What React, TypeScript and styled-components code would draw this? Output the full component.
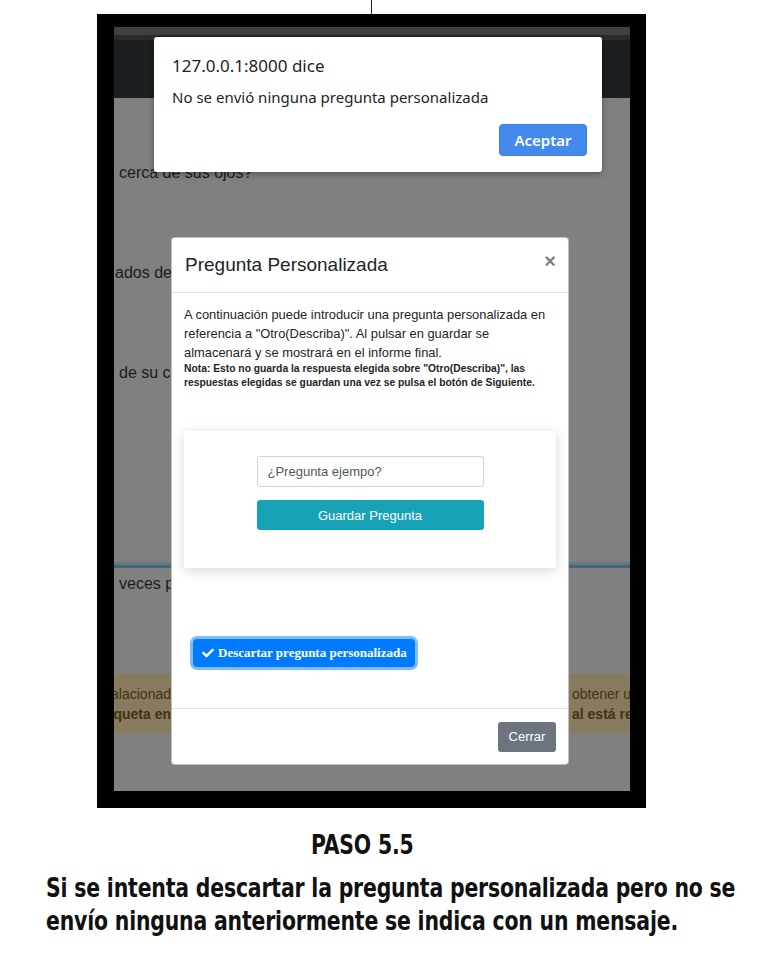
import React from "react";
import styled, { createGlobalStyle } from "styled-components";
import { FaCheck } from "react-icons/fa";

const GlobalStyle = createGlobalStyle`
  html, body {
    margin: 0;
    padding: 0;
    background: #ffffff;
  }
  body {
    font-family: "Liberation Sans", Arial, sans-serif;
  }
`;

const Page = styled.div`
  width: 762px;
  height: 968px;
  background: #fff;
  overflow: hidden;
`;

const Connector = styled.div`
  width: 1px;
  height: 14px;
  margin-left: 371px;
  background: #222;
`;

const Frame = styled.div`
  margin-left: 97px;
  width: 549px;
  height: 794px;
  box-sizing: border-box;
  padding: 13px 16px 17px 17px;
  background: #000;
`;

const Screen = styled.div`
  position: relative;
  width: 516px;
  height: 764px;
  overflow: hidden;
  background: #808080;
  display: flex;
  flex-direction: column;
`;

const TopStrip = styled.div`
  height: 8px;
  background: #404040;
  border-bottom: 5px solid #2b2b2b;
`;

const Navbar = styled.div`
  height: 58px;
  background: #1c1f22;
`;

const Content = styled.div`
  flex: 1;
  padding-top: 66px;
  display: flex;
  flex-direction: column;
  color: #1c1c1c;
  font-size: 16px;
`;

const QuestionText = styled.div<{ $space: number; $indent?: number }>`
  height: 18px;
  line-height: 18px;
  white-space: nowrap;
  padding-left: ${(p) => p.$indent ?? 5}px;
  margin-bottom: ${(p) => p.$space}px;
`;

const Divider = styled.div`
  height: 3px;
  background: #5e7b86;
  border-bottom: 3px solid #4b6570;
  margin-bottom: 7px;
`;

const Banner = styled.div`
  margin-top: 81px;
  height: 59px;
  background: #877b5f;
  color: #43340c;
  font-size: 14px;
  display: flex;
  flex-direction: column;
  justify-content: center;
  gap: 2px;
`;

const BannerLine = styled.div<{ $bold?: boolean }>`
  display: grid;
  grid-template-columns: 57px 401px 1fr;
  height: 18px;
  line-height: 18px;
  font-weight: ${(p) => (p.$bold ? 700 : 400)};
`;

const Clip = styled.span<{ $end?: boolean }>`
  display: flex;
  justify-content: ${(p) => (p.$end ? "flex-end" : "flex-start")};
  overflow: hidden;
  white-space: nowrap;
`;

/* native alert */
const Alert = styled.div`
  position: absolute;
  left: 40px;
  top: 10px;
  width: 448px;
  height: 135px;
  box-sizing: border-box;
  background: #fff;
  border-radius: 3px;
  box-shadow: 0 2px 6px rgba(0, 0, 0, 0.35);
  padding: 18px 15px 16px 18px;
  display: flex;
  flex-direction: column;
  font-family: "Noto Sans", "Open Sans", sans-serif;
  color: #1e1e1e;
`;

const AlertTitle = styled.div`
  font-size: 17px;
  line-height: 22px;
`;

const AlertMessage = styled.div`
  margin-top: 10px;
  font-size: 15px;
  line-height: 20px;
`;

const AlertActions = styled.div`
  margin-top: auto;
  display: flex;
  justify-content: flex-end;
`;

const AlertButton = styled.button`
  width: 88px;
  height: 32px;
  border: 1px solid #3b7de0;
  border-radius: 4px;
  background: #4489ec;
  color: #fff;
  font-family: "Noto Sans", "Open Sans", sans-serif;
  font-size: 15px;
  font-weight: 600;
  padding: 0;
`;

/* bootstrap modal */
const Modal = styled.div`
  position: absolute;
  left: 57px;
  top: 210px;
  width: 398px;
  height: 528px;
  box-sizing: border-box;
  background: #fff;
  border: 1px solid rgba(0, 0, 0, 0.25);
  border-radius: 4px;
  display: flex;
  flex-direction: column;
  color: #212529;
`;

const ModalHeader = styled.div`
  height: 54px;
  flex-shrink: 0;
  padding: 0 12px 0 13px;
  border-bottom: 1px solid #dee2e6;
  display: flex;
  align-items: center;
  justify-content: space-between;
`;

const ModalTitle = styled.h5`
  margin: 0;
  font-size: 19px;
  font-weight: 400;
`;

const CloseButton = styled.button`
  border: 0;
  background: none;
  padding: 0;
  margin-top: -8px;
  font-family: "Liberation Sans", Arial, sans-serif;
  font-size: 20px;
  font-weight: 700;
  color: #000;
  opacity: 0.5;
  line-height: 1;
`;

const ModalBody = styled.div`
  flex: 1;
  padding: 12px 12px 0 12px;
  display: flex;
  flex-direction: column;
  align-items: flex-start;
`;

const Intro = styled.p`
  margin: 0;
  font-size: 12.9px;
  line-height: 19px;
`;

const Note = styled.p`
  margin: 0;
  font-size: 10.3px;
  line-height: 14px;
  font-weight: 700;
`;

const Card = styled.div`
  margin-top: 41px;
  align-self: stretch;
  height: 137px;
  box-sizing: border-box;
  padding-top: 25px;
  background: #fff;
  box-shadow: 0 3px 12px rgba(0, 0, 0, 0.16);
  display: flex;
  flex-direction: column;
  align-items: center;
  gap: 13px;
`;

const QuestionInput = styled.input`
  width: 227px;
  height: 31px;
  box-sizing: border-box;
  padding: 0 10px;
  border: 1px solid #ced4da;
  border-radius: 3px;
  font-family: "Liberation Sans", Arial, sans-serif;
  font-size: 13px;
  color: #495057;
  &::placeholder {
    color: #50565c;
  }
`;

const SaveButton = styled.button`
  width: 227px;
  height: 30px;
  border: 0;
  border-radius: 3px;
  background: #17a2b8;
  color: #fff;
  font-family: "Liberation Sans", Arial, sans-serif;
  font-size: 13px;
`;

const DiscardButton = styled.button`
  margin: 71px 0 0 9px;
  height: 28px;
  padding: 0 8px 0 9px;
  border: 0;
  border-radius: 4px;
  background: #007bff;
  box-shadow: 0 0 0 3px #80bdff;
  color: #fff;
  font-family: "Liberation Serif", "Times New Roman", serif;
  font-size: 13px;
  font-weight: 700;
  display: flex;
  align-items: center;
  gap: 4px;
`;

const ModalFooter = styled.div`
  height: 56px;
  flex-shrink: 0;
  box-sizing: border-box;
  border-top: 1px solid #dee2e6;
  padding: 0 12px;
  display: flex;
  align-items: center;
  justify-content: flex-end;
`;

const CloseFooterButton = styled.button`
  width: 58px;
  height: 30px;
  border: 0;
  border-radius: 3px;
  background: #6c757d;
  color: #fff;
  font-family: "Liberation Sans", Arial, sans-serif;
  font-size: 13px;
  padding: 0;
`;

const Caption = styled.div`
  padding: 20px 0 0 46px;
  font-family: "Liberation Sans Narrow", "DejaVu Sans Condensed", sans-serif;
  font-weight: 700;
  font-size: 27px;
  color: #111;
`;

const CaptionLine = styled.div<{ $indent?: number; $gap?: number }>`
  height: 33px;
  line-height: 33px;
  padding-left: ${(p) => p.$indent ?? 0}px;
  margin-top: ${(p) => p.$gap ?? 0}px;
  white-space: nowrap;
`;

const Condensed = styled.span`
  display: inline-block;
  transform: scaleX(0.84);
  transform-origin: left center;
  letter-spacing: -0.2px;
`;

export default function App() {
  return (
    <Page>
      <GlobalStyle />
      <Connector />
      <Frame>
        <Screen>
          <TopStrip />
          <Navbar />
          <Content>
            <QuestionText $space={82}>cerca de sus ojos?</QuestionText>
            <QuestionText $space={82} $indent={1}>ados de los ojos?</QuestionText>
            <QuestionText $space={180}>de su cabeza?</QuestionText>
            <Divider />
            <QuestionText $space={0}>veces por semana?</QuestionText>
            <Banner>
              <BannerLine>
                <Clip $end>Pregunta realacionad</Clip>
                <span />
                <Clip>obtener un</Clip>
              </BannerLine>
              <BannerLine $bold>
                <Clip $end>etiqueta en</Clip>
                <span />
                <Clip>al está relacionada</Clip>
              </BannerLine>
            </Banner>
          </Content>

          <Modal>
            <ModalHeader>
              <ModalTitle>Pregunta Personalizada</ModalTitle>
              <CloseButton aria-label="Close">×</CloseButton>
            </ModalHeader>
            <ModalBody>
              <Intro>
                A continuación puede introducir una pregunta personalizada en
                referencia a "Otro(Describa)". Al pulsar en guardar se
                almacenará y se mostrará en el informe final.
              </Intro>
              <Note>
                Nota: Esto no guarda la respuesta elegida sobre
                "Otro(Describa)", las respuestas elegidas se guardan una vez se
                pulsa el botón de Siguiente.
              </Note>
              <Card>
                <QuestionInput placeholder="¿Pregunta ejempo?" />
                <SaveButton>Guardar Pregunta</SaveButton>
              </Card>
              <DiscardButton>
                <FaCheck size={12} />
                Descartar pregunta personalizada
              </DiscardButton>
            </ModalBody>
            <ModalFooter>
              <CloseFooterButton>Cerrar</CloseFooterButton>
            </ModalFooter>
          </Modal>

          <Alert>
            <AlertTitle>127.0.0.1:8000 dice</AlertTitle>
            <AlertMessage>No se envió ninguna pregunta personalizada</AlertMessage>
            <AlertActions>
              <AlertButton>Aceptar</AlertButton>
            </AlertActions>
          </Alert>
        </Screen>
      </Frame>
      <Caption>
        <CaptionLine $indent={265}>
          <Condensed>PASO 5.5</Condensed>
        </CaptionLine>
        <CaptionLine $gap={10}>
          <Condensed>Si se intenta descartar la pregunta personalizada pero no se</Condensed>
        </CaptionLine>
        <CaptionLine>
          <Condensed>envío ninguna anteriormente se indica con un mensaje.</Condensed>
        </CaptionLine>
      </Caption>
    </Page>
  );
}
